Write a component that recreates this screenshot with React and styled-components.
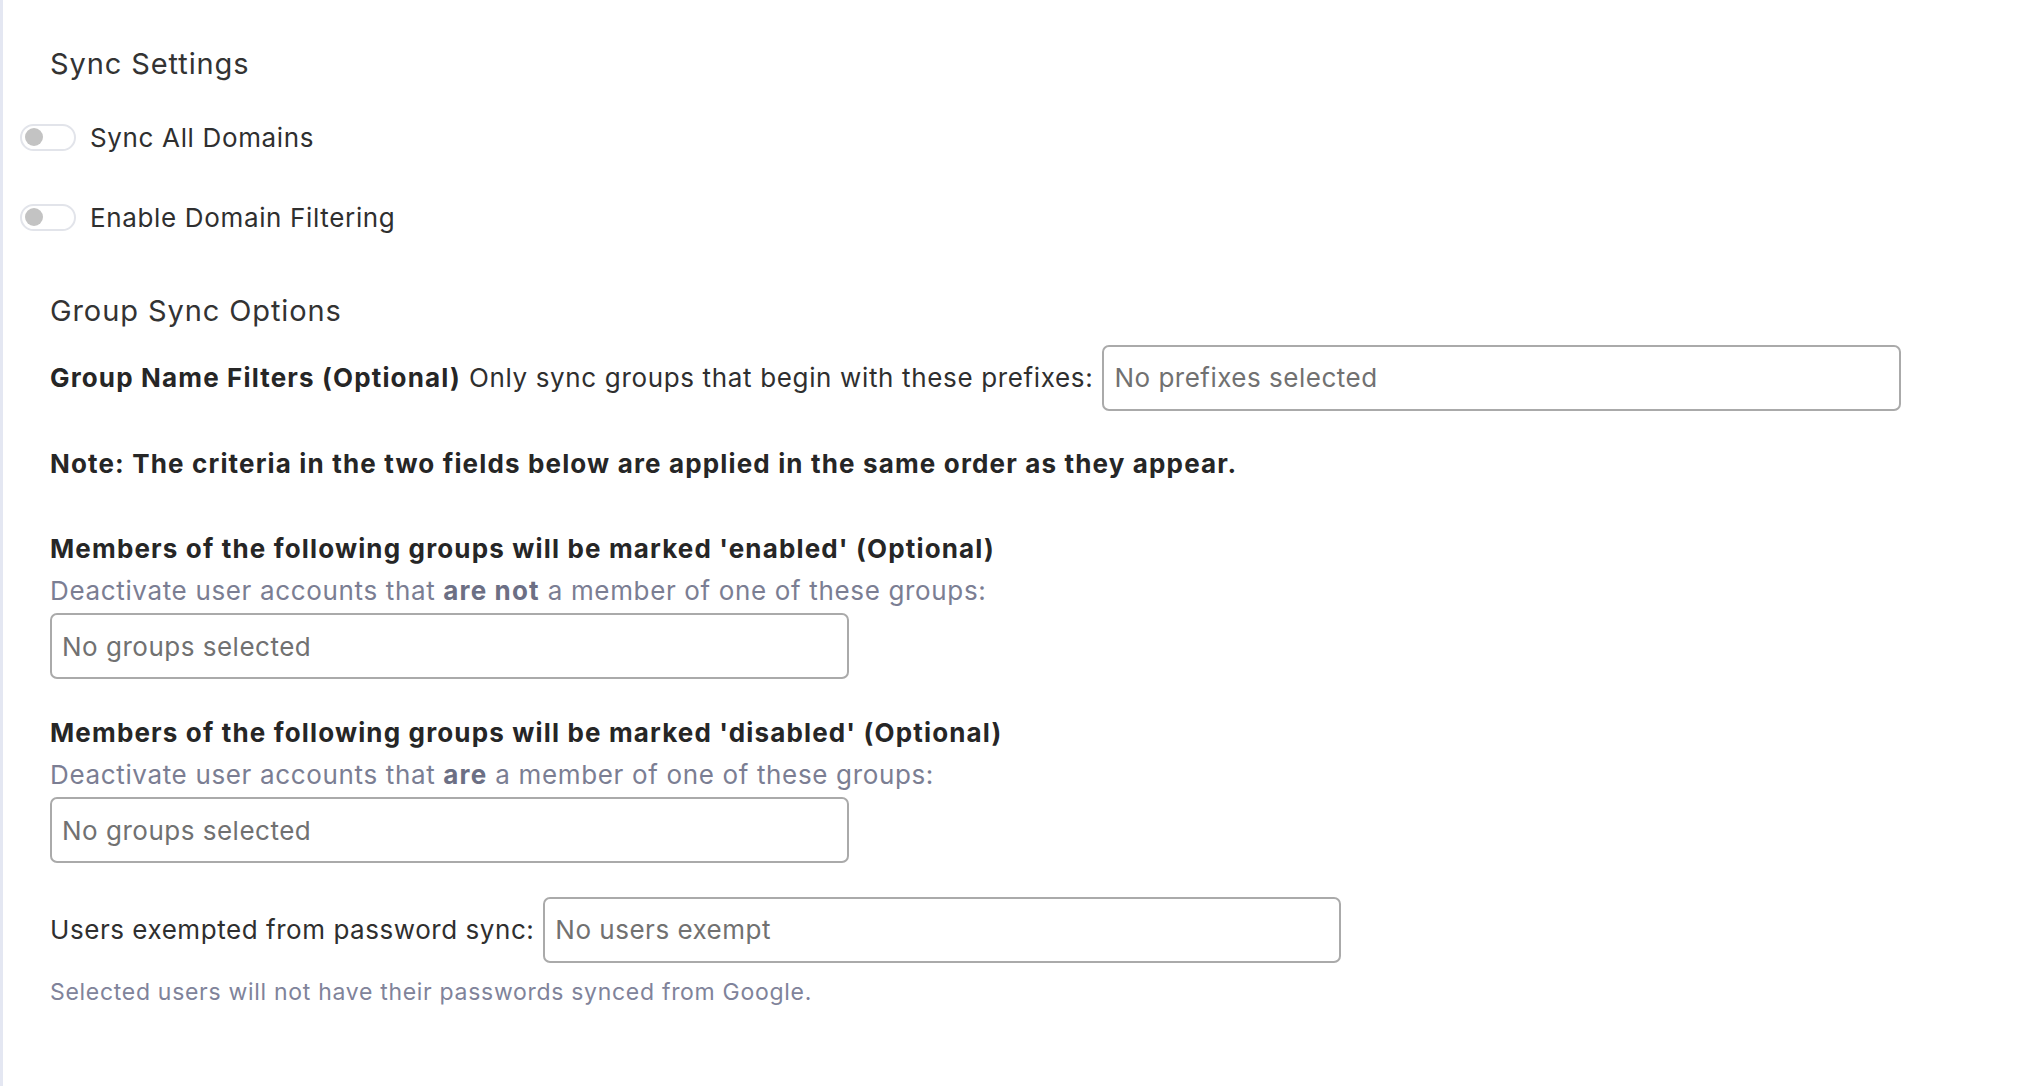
import React from "react";
import styled, { createGlobalStyle } from "styled-components";

const GlobalStyle = createGlobalStyle`
  html, body {
    margin: 0;
    padding: 0;
    background: #ffffff;
  }
  body {
    font-family: Inter, "Noto Sans", "Liberation Sans", sans-serif;
    color: #2d2d2d;
  }
`;

const Page = styled.div`
  min-height: 100vh;
  box-sizing: border-box;
  border-left: 3px solid #e4e7f2;
  padding: 46px 0 0 17px;
  display: flex;
  flex-direction: column;
`;

const SectionTitle = styled.h2`
  margin: ${(p) => p.$top || 0}px 0 0 30px;
  font-size: 29px;
  line-height: 36px;
  font-weight: 400;
  letter-spacing: 0.9px;
  color: #333333;
`;

const ToggleRow = styled.label`
  display: flex;
  align-items: center;
  gap: 14px;
  height: 32px;
  margin-top: ${(p) => p.$top}px;
  font-size: 26px;
  letter-spacing: 0.65px;
  color: #2f2f2f;
`;

const Switch = styled.span`
  position: relative;
  box-sizing: border-box;
  width: 56px;
  height: 27px;
  border: 2px solid #e2e4ea;
  border-radius: 14px;
  background: #ffffff;
  flex-shrink: 0;

  &::after {
    content: "";
    position: absolute;
    left: 3px;
    top: 2.5px;
    width: 18px;
    height: 18px;
    border-radius: 50%;
    background: #c3c3c3;
  }
`;

const Body = styled.div`
  margin-left: 30px;
  display: flex;
  flex-direction: column;
`;

const InlineRow = styled.div`
  display: flex;
  align-items: center;
  gap: 9px;
  margin-top: ${(p) => p.$top}px;
  font-size: 26px;
  line-height: 32px;
  letter-spacing: ${(p) => p.$ls || 0.65}px;
  color: #2f2f2f;
  white-space: nowrap;
`;

const Strong = styled.b`
  font-weight: 700;
  letter-spacing: 1.15px;
  color: ${(p) => (p.$muted ? "#6c6f84" : "#262626")};
`;

const Line = styled.div`
  margin-top: ${(p) => p.$top}px;
  font-size: 26px;
  line-height: 32px;
  font-weight: ${(p) => (p.$bold ? 700 : 400)};
  letter-spacing: ${(p) => (p.$bold ? 1.15 : 0.65)}px;
  color: ${(p) => (p.$bold ? "#262626" : "#7b7e93")};
  white-space: nowrap;
`;

const Field = styled.div`
  box-sizing: border-box;
  width: ${(p) => p.$w}px;
  height: 66px;
  margin-top: ${(p) => p.$top || 0}px;
  border: 2px solid #aaaaaa;
  border-radius: 7px;
  padding: 0 10px;
  display: flex;
  align-items: center;
  font-size: 26px;
  letter-spacing: 0.5px;
  color: #717171;
  background: #ffffff;
  flex-shrink: 0;
`;

const Hint = styled.div`
  margin-top: 15px;
  font-size: 23px;
  line-height: 28px;
  letter-spacing: 0.7px;
  color: #80839a;
`;

export default function App() {
  return (
    <>
      <GlobalStyle />
      <Page>
        <SectionTitle>Sync Settings</SectionTitle>
        <ToggleRow $top={39}>
          <Switch />
          Sync All Domains
        </ToggleRow>
        <ToggleRow $top={48}>
          <Switch />
          Enable Domain Filtering
        </ToggleRow>

        <SectionTitle $top={60}>Group Sync Options</SectionTitle>
        <Body>
          <InlineRow $top={16}>
            <span>
              <Strong>Group Name Filters (Optional)</Strong> Only sync groups that begin with these prefixes:
            </span>
            <Field $w={799}>No prefixes selected</Field>
          </InlineRow>

          <Line $bold $top={37}>
            Note: The criteria in the two fields below are applied in the same order as they appear.
          </Line>

          <Line $bold $top={53}>
            Members of the following groups will be marked 'enabled' (Optional)
          </Line>
          <Line $top={10}>
            Deactivate user accounts that <Strong $muted>are not</Strong> a member of one of these groups:
          </Line>
          <Field $w={799} $top={6}>No groups selected</Field>

          <Line $bold $top={38}>
            Members of the following groups will be marked 'disabled' (Optional)
          </Line>
          <Line $top={10}>
            Deactivate user accounts that <Strong $muted>are</Strong> a member of one of these groups:
          </Line>
          <Field $w={799} $top={6}>No groups selected</Field>

          <InlineRow $top={34} $ls={0.55}>
            <span>Users exempted from password sync:</span>
            <Field $w={798}>No users exempt</Field>
          </InlineRow>
          <Hint>Selected users will not have their passwords synced from Google.</Hint>
        </Body>
      </Page>
    </>
  );
}
